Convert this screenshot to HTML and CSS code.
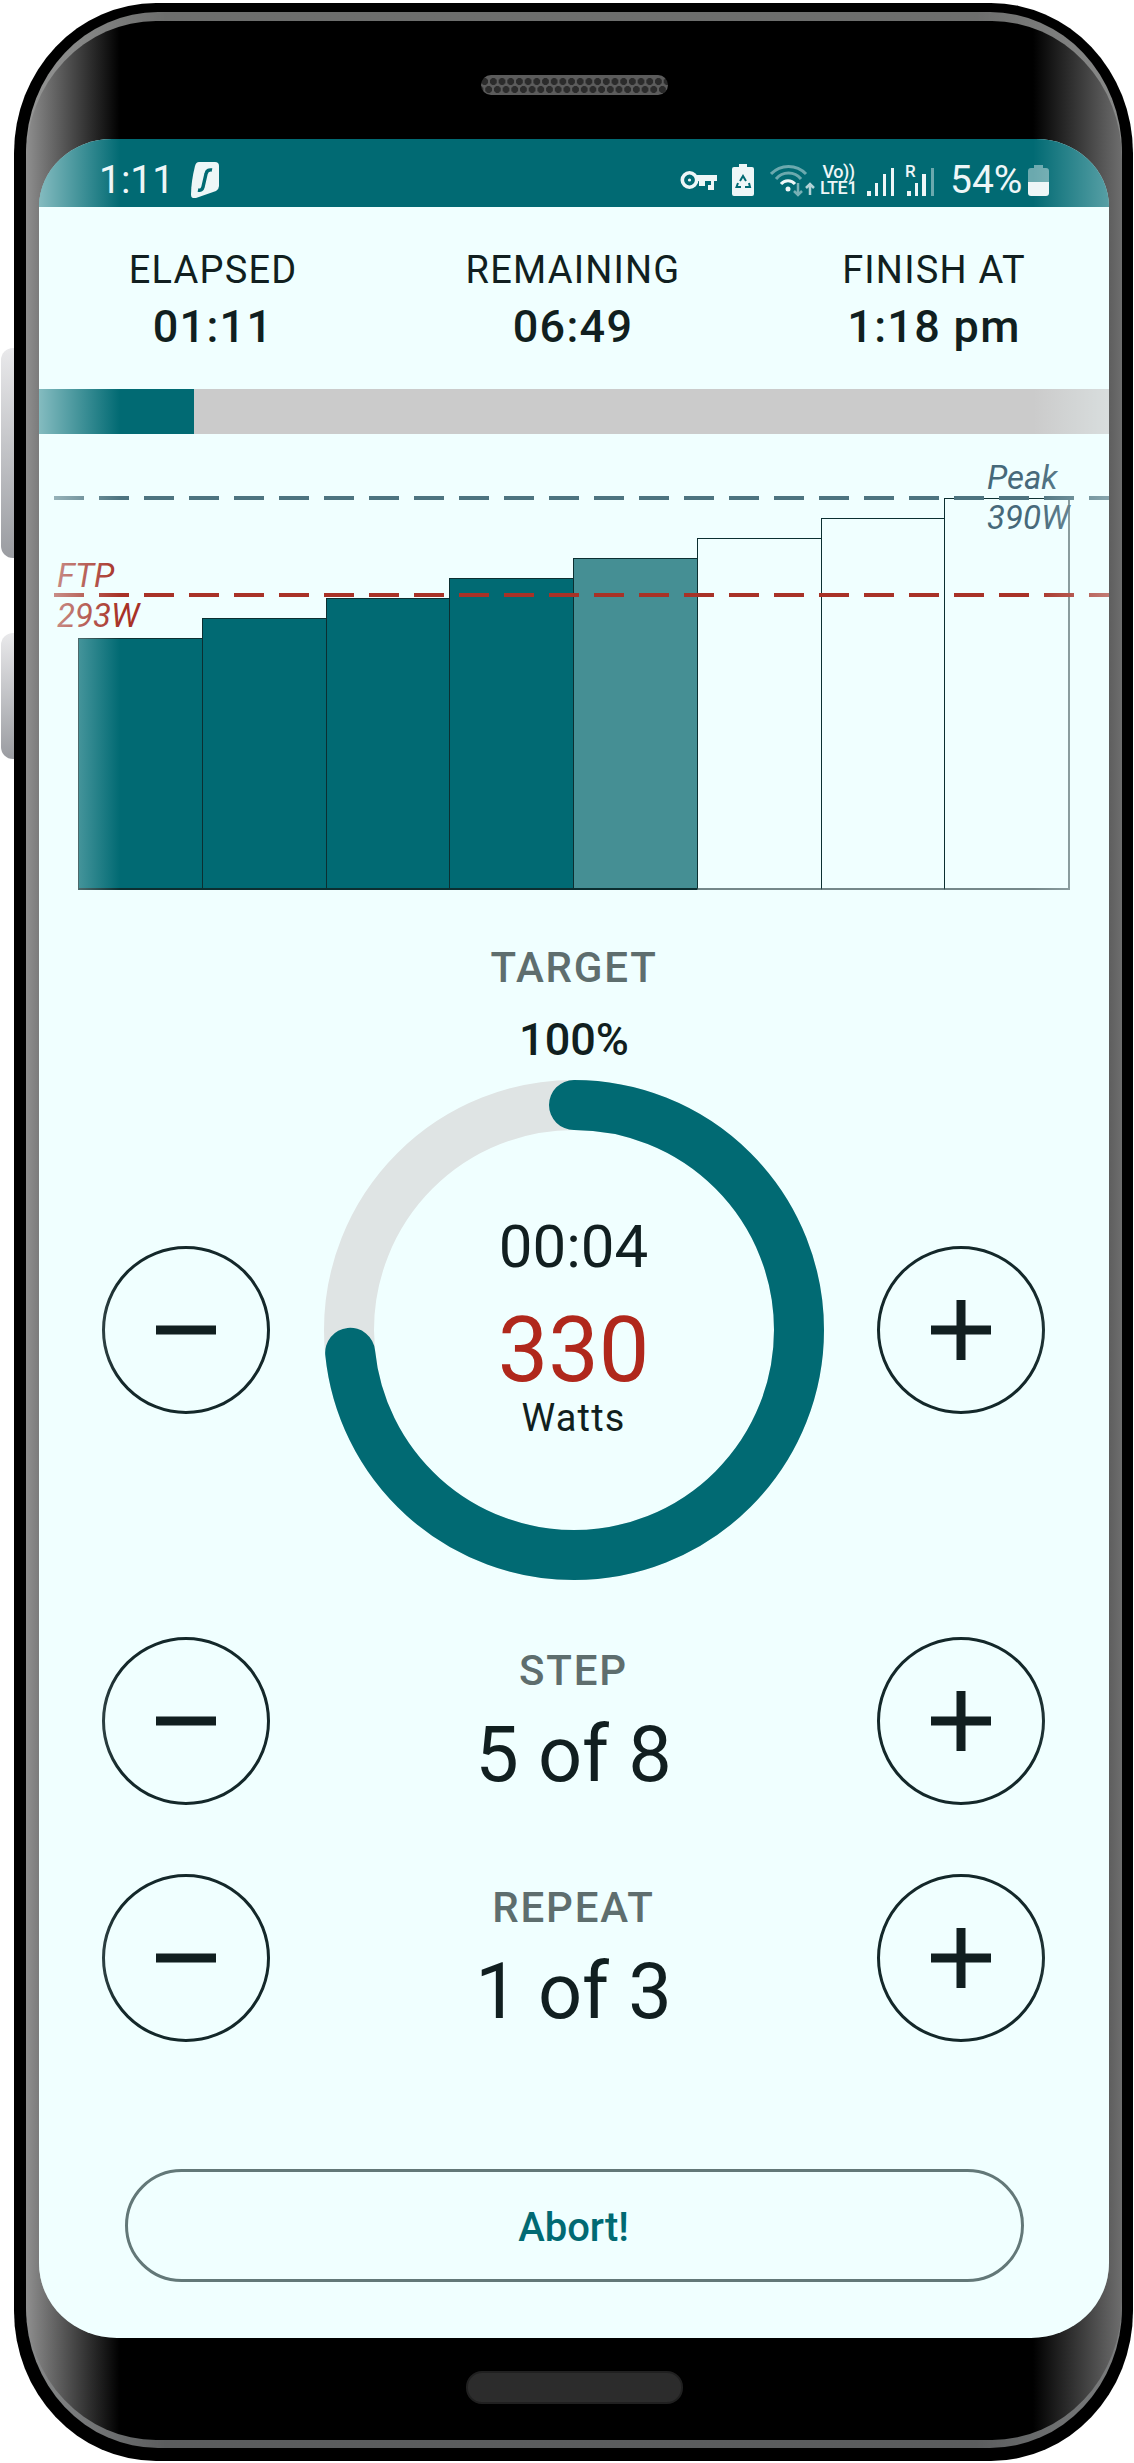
FILE: index.html
```html
<!DOCTYPE html>
<html lang="en">
<head>
  <meta charset="UTF-8" />
  <meta name="viewport" content="width=device-width, initial-scale=1.0"/>
  <title>Workout</title>
  <link rel="stylesheet" href="styles.css">
</head>
<body>

  <div class="side-key side-key-power"></div>
  <div class="side-key side-key-volume"></div>

  <div class="shell">
    <div class="frame">
      <div class="glass">
        <div class="speaker"></div>

        <div class="screen">
          <div class="status">
            <span class="clock">1:11</span>
            <svg class="shark" viewBox="0 0 28 36">
              <path fill="#eef6f7" d="M8 0H24Q28 0 28 4V24Q28 27 25 29L5 36Q0 37 0 33Q0 20 4 4Q5 0 8 0Z"/>
              <path fill="none" stroke="#016a73" stroke-width="3.4" d="M21 8Q16 7 15 12L12 25Q11 29 7 28"/>
            </svg>

            <svg class="ico-key" viewBox="0 0 37 20">
              <circle cx="9.5" cy="10" r="7.2" fill="none" stroke="#eef6f7" stroke-width="3.6"/>
              <circle cx="9.5" cy="10" r="1.6" fill="#eef6f7"/>
              <path fill="#eef6f7" d="M16 5H37V11H34V20H28V15H31V11H25V16H19V11H16Z"/>
            </svg>

            <svg class="ico-cell" viewBox="0 0 22 32">
              <path fill="#eef6f7" d="M7 0H15V3H20Q22 3 22 5V30Q22 32 20 32H2Q0 32 0 30V5Q0 3 2 3H7Z"/>
              <path fill="none" stroke="#016a73" stroke-width="2" d="M8 17L11 12L14 17M17 19L18 23H13M9 23H4.500L6 19"/>
            </svg>

            <svg class="ico-wifi" viewBox="0 0 45 33">
              <g fill="none" stroke-width="3" stroke="#eef6f7">
                <path opacity="0.45" d="M1 10A24 24 0 0 1 36 10"/>
                <path opacity="0.45" d="M6 15A16 16 0 0 1 31 15"/>
                <path d="M11 20A9 9 0 0 1 25 20"/>
              </g>
              <circle cx="18" cy="25" r="2.500" fill="#eef6f7"/>
              <path fill="none" stroke="#eef6f7" stroke-width="2.500" opacity="0.5" d="M28 19V31M24 27L28 31L32 27"/>
              <path fill="none" stroke="#eef6f7" stroke-width="2.500" opacity="0.75" d="M40 31V20M36 24L40 20L44 24"/>
            </svg>

            <div class="volte">
              <span>Vo))</span>
              <span>LTE1</span>
            </div>

            <svg class="ico-signal" viewBox="0 0 28 28">
              <path fill="#eef6f7" d="M0 23H4V28H0ZM8 15H11V28H8ZM16 6H19V28H16ZM24 0H27V28H24Z"/>
            </svg>

            <svg class="ico-signal-r" viewBox="0 -6 30 44">
              <text class="roam" x="0" y="13">R</text>
              <path fill="#eef6f7" d="M2 27H6V32H2ZM10 19H13V32H10ZM17 10H21V32H17Z"/>
              <path fill="#eef6f7" opacity="0.45" d="M26 4H29V32H26Z"/>
            </svg>

            <span class="percent">54%</span>

            <svg class="ico-battery" viewBox="0 0 21 31">
              <path fill="#eef6f7" opacity="0.45" d="M6 0H15V3H18Q21 3 21 6V17H0V6Q0 3 3 3H6Z"/>
              <path fill="#eef6f7" d="M0 17H21V28Q21 31 18 31H3Q0 31 0 28Z"/>
            </svg>
          </div>

          <div class="stats">
            <div class="stat">
              <div class="stat-label">ELAPSED</div>
              <div class="stat-value">01:11</div>
            </div>
            <div class="stat">
              <div class="stat-label">REMAINING</div>
              <div class="stat-value">06:49</div>
            </div>
            <div class="stat">
              <div class="stat-label">FINISH AT</div>
              <div class="stat-value">1:18 pm</div>
            </div>
          </div>

          <div class="progress"><div class="progress-fill"></div></div>

          <div class="chart">
            <div class="bars">
              <div class="bar bar-done" style="height: 252px"></div>
              <div class="bar bar-done" style="height: 272px"></div>
              <div class="bar bar-done" style="height: 292px"></div>
              <div class="bar bar-done" style="height: 312px"></div>
              <div class="bar bar-now" style="height: 332px"></div>
              <div class="bar bar-next" style="height: 352px"></div>
              <div class="bar bar-next" style="height: 372px"></div>
              <div class="bar bar-next bar-last" style="height: 392px"></div>
            </div>
            <div class="limit limit-peak"></div>
            <div class="limit limit-ftp"></div>
            <div class="chart-label label-ftp">FTP<br>293W</div>
            <div class="chart-label label-peak">Peak<br>390W</div>
          </div>

          <div class="target-title">TARGET</div>
          <div class="target-percent">100%</div>

          <div class="ctrl-row ctrl-ring">
            <button class="round-btn">
              <svg viewBox="0 0 60 60"><path d="M0 25.500H60V34.500H0Z"/></svg>
            </button>
            <div class="ring">
              <svg class="ring-svg" viewBox="0 0 500 500">
                <circle class="ring-track" cx="250" cy="250" r="225"/>
                <circle class="ring-value" cx="250" cy="250" r="225" transform="rotate(-90 250 250)"/>
              </svg>
              <div class="ring-time">00:04</div>
              <div class="ring-watts">330</div>
              <div class="ring-unit">Watts</div>
            </div>
            <button class="round-btn">
              <svg viewBox="0 0 60 60"><path d="M25.500 0H34.500V25.500H60V34.500H34.500V60H25.500V34.500H0V25.500H25.500Z"/></svg>
            </button>
          </div>

          <div class="ctrl-row ctrl-step">
            <button class="round-btn">
              <svg viewBox="0 0 60 60"><path d="M0 25.500H60V34.500H0Z"/></svg>
            </button>
            <div class="ctrl-text">
              <div class="ctrl-label">STEP</div>
              <div class="ctrl-value">5 of 8</div>
            </div>
            <button class="round-btn">
              <svg viewBox="0 0 60 60"><path d="M25.500 0H34.500V25.500H60V34.500H34.500V60H25.500V34.500H0V25.500H25.500Z"/></svg>
            </button>
          </div>

          <div class="ctrl-row ctrl-repeat">
            <button class="round-btn">
              <svg viewBox="0 0 60 60"><path d="M0 25.500H60V34.500H0Z"/></svg>
            </button>
            <div class="ctrl-text">
              <div class="ctrl-label">REPEAT</div>
              <div class="ctrl-value">1 of 3</div>
            </div>
            <button class="round-btn">
              <svg viewBox="0 0 60 60"><path d="M25.500 0H34.500V25.500H60V34.500H34.500V60H25.500V34.500H0V25.500H25.500Z"/></svg>
            </button>
          </div>

          <button class="abort">Abort!</button>

          <div class="sheen"></div>
        </div>

        <div class="home-pill"></div>
      </div>
    </div>
  </div>

</body>
</html>
```

FILE: styles.css
```css
* {
  box-sizing: border-box;
}

body {
  margin: 0;
  width: 1134px;
  height: 2463px;
  overflow: hidden;
  background: #fff;
  font-family: Roboto, "Liberation Sans", sans-serif;
  color: #111f20;
  position: relative;
}

/* phone body */
.side-key {
  position: absolute;
  left: 1px;
  width: 16px;
  border-radius: 12px 0 0 12px;
  background: linear-gradient(#e9e9eb, #9a9ca1);
}

.side-key-power {
  top: 348px;
  height: 210px;
}

.side-key-volume {
  top: 633px;
  height: 126px;
}

.shell {
  position: relative;
  margin: 3px 0 0 14px;
  width: 1119px;
  height: 2458px;
  padding: 9px 11px 13px 12px;
  background: #000;
  border-radius: 142px / 150px;
}

.frame {
  height: 100%;
  padding: 9px 0 8px;
  border-radius: 132px / 140px;
  background:
    linear-gradient(to right, rgba(255, 255, 255, 0.28), transparent 140px, transparent 950px, rgba(255, 255, 255, 0.2)),
    linear-gradient(#6d6e6d, #5b5d5e);
}

.glass {
  height: 100%;
  padding: 0 13px;
  display: flex;
  flex-direction: column;
  border-radius: 130px / 138px;
  background: linear-gradient(to right, #8f8f8f 0, #000 94px, #000 1007px, #6e6e6e 100%);
}

.speaker {
  flex: none;
  width: 187px;
  height: 20px;
  margin: 54px auto 44px;
  border-radius: 10px;
  background-color: #5c5c5c;
  background-image:
    radial-gradient(circle, #2b2b2b 3.2px, transparent 3.8px),
    radial-gradient(circle, #2b2b2b 3.2px, transparent 3.8px);
  background-size: 8.7px 9px;
  background-repeat: repeat-x;
  background-position: 8px 2px, 12px 10px;
}

.home-pill {
  flex: none;
  width: 217px;
  height: 33px;
  margin: 33px auto 0;
  border-radius: 16px;
  background: #2c2c2c;
  border: 2px solid #202020;
}

/* screen */
.screen {
  flex: none;
  position: relative;
  height: 2199px;
  overflow: hidden;
  background: #f0ffff;
  border-radius: 73px 73px 78px 78px / 68px 68px 75px 75px;
}

.sheen {
  position: absolute;
  inset: 0;
  pointer-events: none;
  background: linear-gradient(to right, rgba(240, 255, 255, 0.55), transparent 81px, transparent 994px, rgba(240, 255, 255, 0.36));
}

.status {
  height: 68px;
  padding: 14px 0 0 60px;
  display: flex;
  align-items: center;
  background: #016a73;
  color: #eef6f7;
}

.clock,
.percent {
  font-size: 39px;
  line-height: 40px;
  white-space: nowrap;
}

.clock {
  width: 72px;
}

.shark {
  width: 28px;
  height: 36px;
  margin-left: 20px;
}

.ico-key {
  width: 37px;
  height: 20px;
  margin-left: 461px;
}

.ico-cell {
  width: 22px;
  height: 32px;
  margin-left: 15px;
}

.ico-wifi {
  width: 45px;
  height: 33px;
  margin-left: 16px;
}

.volte {
  width: 37px;
  margin-left: 5px;
  display: flex;
  flex-direction: column;
  align-items: center;
  font-size: 18px;
  font-weight: 500;
  line-height: 16px;
  letter-spacing: -0.5px;
}

.ico-signal {
  width: 28px;
  height: 28px;
  margin-left: 10px;
  margin-top: 4px;
}

.ico-signal-r {
  width: 30px;
  height: 44px;
  margin-left: 10px;
}

.roam {
  font-size: 17px;
  font-weight: 500;
  fill: #eef6f7;
}

.percent {
  width: 72px;
  margin-left: 15px;
}

.ico-battery {
  width: 21px;
  height: 31px;
  margin-left: 6px;
}

/* top counters */
.stats {
  height: 182px;
  padding-top: 43px;
  display: grid;
  grid-template-columns: 348px 372px 350px;
  text-align: center;
}

.stat-label {
  font-size: 38px;
  line-height: 40px;
  letter-spacing: 1.200px;
}

.stat-value {
  margin-top: 12px;
  font-size: 45px;
  font-weight: 500;
  line-height: 50px;
  letter-spacing: 1.300px;
}

.progress {
  height: 45px;
  background: #cbcbcb;
}

.progress-fill {
  width: 155px;
  height: 100%;
  background: #016a73;
}

/* chart */
.chart {
  position: relative;
  height: 466px;
}

.bars {
  position: absolute;
  left: 39px;
  bottom: 10px;
  width: 992px;
  display: flex;
  align-items: flex-end;
}

.bar {
  flex: 1;
  border: 1px solid #0c2f31;
  border-width: 1px 0 2px 1px;
}

.bar-done {
  background: #016a73;
}

.bar-now {
  background: #458f94;
}

.bar-next {
  border-bottom-color: #75888a;
}

.bar-last {
  border-right: 2px solid #75888a;
}

.limit {
  position: absolute;
  left: 15px;
  right: 0;
  height: 4px;
}

.limit-peak {
  top: 62px;
  background: repeating-linear-gradient(to right, #4d7480 0 30px, transparent 30px 45px);
}

.limit-ftp {
  top: 159px;
  background: repeating-linear-gradient(to right, #a83227 0 30px, transparent 30px 45px);
}

.chart-label {
  position: absolute;
  font-size: 33px;
  font-style: italic;
  font-weight: 400;
  line-height: 40px;
}

.label-ftp {
  left: 18px;
  top: 122px;
  color: #a83227;
}

.label-peak {
  left: 948px;
  top: 24px;
  color: #46697a;
}

/* target */
.target-title {
  margin-top: 43px;
  text-align: center;
  font-size: 42px;
  font-weight: 500;
  line-height: 50px;
  letter-spacing: 1.800px;
  color: #5e6e6e;
}

.target-percent {
  margin-top: 24px;
  text-align: center;
  font-size: 45px;
  font-weight: 500;
  line-height: 46px;
}

.ctrl-row {
  display: flex;
  align-items: center;
  justify-content: space-between;
  padding: 0 64px 0 63px;
}

.ctrl-ring {
  margin-top: 17px;
  height: 500px;
}

.ctrl-step {
  margin-top: 57px;
  height: 168px;
}

.ctrl-repeat {
  margin-top: 69px;
  height: 168px;
}

.round-btn {
  width: 168px;
  height: 168px;
  padding: 0;
  display: flex;
  align-items: center;
  justify-content: center;
  background: transparent;
  border: 3px solid #14282a;
  border-radius: 50%;
}

.round-btn svg {
  width: 60px;
  height: 60px;
  fill: #111f20;
}

.ring {
  position: relative;
  width: 500px;
  height: 500px;
  padding-top: 132px;
  text-align: center;
}

.ring-svg {
  position: absolute;
  left: 0;
  top: 0;
  width: 500px;
  height: 500px;
}

.ring-track,
.ring-value {
  fill: none;
  stroke-width: 50;
}

.ring-track {
  stroke: #dfe4e4;
}

.ring-value {
  stroke: #016a73;
  stroke-linecap: round;
  stroke-dasharray: 1037 1414;
}

.ring-time {
  font-size: 60px;
  line-height: 70px;
}

.ring-watts {
  margin-top: 19px;
  font-size: 90px;
  line-height: 100px;
  color: #b0281c;
}

.ring-unit {
  margin-top: -5px;
  font-size: 38px;
  line-height: 44px;
  letter-spacing: 1.200px;
}

.ctrl-text {
  padding-top: 2px;
  text-align: center;
}

.ctrl-label {
  font-size: 42px;
  font-weight: 500;
  line-height: 44px;
  letter-spacing: 1.800px;
  color: #5e6e6e;
}

.ctrl-value {
  margin-top: 22px;
  font-size: 77.500px;
  line-height: 80px;
}

.abort {
  display: block;
  width: 899px;
  height: 113px;
  margin: 127px 0 0 86px;
  padding: 4px 8px 0 6px;
  background: transparent;
  border: 3px solid #637878;
  border-radius: 57px;
  font-family: inherit;
  font-size: 40px;
  font-weight: 500;
  color: #016a73;
}
```
